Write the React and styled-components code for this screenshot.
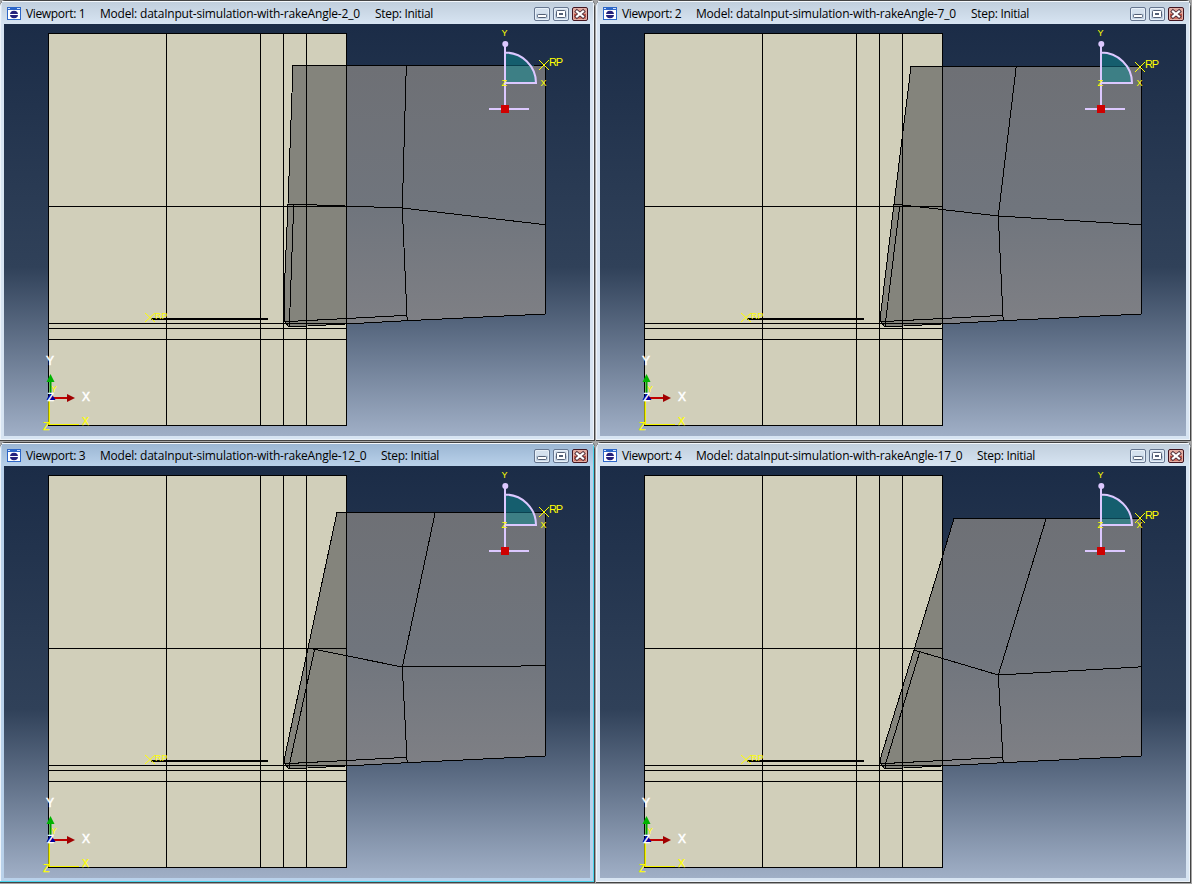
import React from 'react';
import styled, { createGlobalStyle } from 'styled-components';

const GlobalStyle = createGlobalStyle`
  * { box-sizing: border-box; }
  body { margin: 0; overflow: hidden; background: #a5a5a5; }
`;

const Workspace = styled.main`
  width: 1192px;
  height: 884px;
  display: grid;
  grid-template-columns: 596px 596px;
  grid-template-rows: 442px 442px;
  background: #a5a5a5;
  font-family: "Open Sans", "Noto Sans", sans-serif;
`;

const Window = styled.section`
  width: 595px;
  height: 441px;
  display: flex;
  flex-direction: column;
  padding: 0 4px 4px;
  border-radius: 5px 5px 0 0;
  overflow: hidden;
  background: ${(p) => (p.$active ? '#b9d1ea' : '#d7e4f2')};
  box-shadow: inset 0 1px #3c3c3c, inset 0 2px #f2f7fc, inset -1px -1px #444,
    inset -2px -2px ${(p) => (p.$active ? '#48d5ee' : '#eef4fa')}, inset 1px 0 #eef4fa;
`;

const TitleBar = styled.header`
  height: 24px;
  flex: none;
  margin: 0 -2px;
  padding: 4px 5px 0 5px;
  display: flex;
  align-items: center;
  background: ${(p) =>
    p.$active
      ? 'linear-gradient(#99b4d1, #b9d1ea)'
      : 'linear-gradient(#bfcddb, #d7e4f2)'};
  box-shadow: inset 0 1px #444, inset 0 2px #f4f8fc;
`;

const Label = styled.span`
  font-size: 12px;
  line-height: 16px;
  white-space: pre;
  color: #000;
  width: ${(p) => p.$width}px;
  margin-right: 15px;
  letter-spacing: ${(p) => p.$spacing || 0}px;
`;

const AppIcon = styled.svg`
  width: 14px;
  height: 14px;
  margin-right: 5px;
  flex: none;
`;

const Controls = styled.div`
  display: flex;
  gap: 3px;
  margin-left: auto;
`;

const ControlButton = styled.button`
  width: 16px;
  height: 14px;
  padding: 0;
  display: block;
  border: 1px solid ${(p) => (p.$close ? '#43141f' : '#65758f')};
  border-radius: 2px;
  background: ${(p) =>
    p.$close
      ? 'linear-gradient(#e0a397 0 45%, #b8483c 50%, #d78373)'
      : 'linear-gradient(#d5e1ee 0 45%, #b4c6da 50%, #cfdeed)'};
  box-shadow: inset 0 0 0 1px ${(p) => (p.$close ? '#e3b1a8' : '#e8f0f8')};
  svg { display: block; }
`;

const Canvas = styled.svg`
  width: 586px;
  height: 412px;
  flex: none;
  display: block;
  font-family: "Liberation Sans", Arial, sans-serif;
`;

const MODELS = [
  { id: 1, model: '2_0', modelWidth: 260, top: 65, left: 293, topMid: 406, shoulder: [288, 204], centre: 208, rightMid: 225, inner: [293, 205], rp: 65 },
  { id: 2, model: '7_0', modelWidth: 260, top: 66, left: 315, topMid: 420, shoulder: [298, 204], centre: 216, rightMid: 225, inner: [303, 206], rp: 67 },
  { id: 3, model: '12_0', modelWidth: 266, top: 70, left: 337, topMid: 435, shoulder: [308, 206], centre: 225, rightMid: 224, inner: [314, 207], rp: 70, active: true },
  { id: 4, model: '17_0', modelWidth: 266, top: 76, left: 358, topMid: 450, shoulder: [318, 208], centre: 233, rightMid: 225, inner: [323, 210], rp: 76 },
];

function ViewportIcon() {
  return (
    <AppIcon viewBox="0 0 14 14">
      <rect width="14" height="13" fill="#2c66c8" />
      <path d="M1 1.5h2M10 1.5h3" stroke="#cfe2ff" />
      <rect x="1" y="3" width="12" height="9" fill="#fff" />
      <path d="M3 7.5a4 3.8 0 0 1 8 0a4 3.8 0 0 1-8 0" fill="#25217c" />
      <path d="M2 7.5h10" stroke="#fff" />
    </AppIcon>
  );
}

function WindowControls() {
  return (
    <Controls>
      <ControlButton aria-label="Minimize">
        <svg width="14" height="12"><rect x="2.5" y="6.5" width="9" height="3" rx="1" fill="#fff" stroke="#535f75" /></svg>
      </ControlButton>
      <ControlButton aria-label="Maximize">
        <svg width="14" height="12"><rect x="2.5" y="2.5" width="9" height="7" rx="1" fill="#fff" stroke="#535f75" /><rect x="5.5" y="5.5" width="3" height="1" fill="#b9cadd" stroke="#535f75" /></svg>
      </ControlButton>
      <ControlButton $close aria-label="Close">
        <svg width="14" height="12"><path d="M4 3.5l6 5M10 3.5l-6 5" stroke="#4f303b" strokeWidth="4" strokeLinecap="square" /><path d="M4 3.5l6 5M10 3.5l-6 5" stroke="#fff" strokeWidth="2.2" strokeLinecap="square" /></svg>
      </ControlButton>
    </Controls>
  );
}

function Workpiece() {
  return (
    <path
      d="M166.5 34v392M260.5 34v392M283.5 34v392M306.5 34v392M48 206.5h299M48 323.5h299M48 328.5h299M48 339.5h299M48.5 33.5h298v392h-298z"
      fill="none" stroke="#000" shapeRendering="crispEdges"
    />
  );
}

function ViewCompass({ id, top }) {
  const clip = `compass-${id}`;
  return (
    <g>
      <clipPath id={clip}><rect x="500" y={top} width="45" height="50" /></clipPath>
      <path d="M505 53a31 30 0 0 1 31 30h-31z" fill="#155e6e" />
      <path d="M505 53a31 30 0 0 1 31 30h-31z" fill="#3d7f85" clipPath={`url(#${clip})`} />
      <path d={`M505 ${top + 0.5}h29`} stroke="#0b4250" />
      <path d="M505 44v64M505 52.5a31 30.5 0 0 1 31 30.5H505" fill="none" stroke="#dcc8ff" strokeWidth="2" />
      <path d="M489 109h40" stroke="#dcc8ff" strokeWidth="2" />
      <circle cx="505.3" cy="44" r="3" fill="#dcc8ff" />
      <rect x="501" y="105" width="8" height="8" fill="#cf0000" />
    </g>
  );
}

function Triad() {
  return (
    <g>
      <path d="M49 400v25" stroke="#96960a" strokeWidth="2" shapeRendering="crispEdges" />
      <path d="M49.5 400v25M49 424.5h30" stroke="#f4f400" shapeRendering="crispEdges" />
      <text x="51" y="392" fontSize="9" fill="#ffff00">Y</text>
      <path d="M50.5 398v-17" stroke="#00a000" strokeWidth="2" />
      <path d="M50.5 374l4 8h-8z" fill="#00b400" />
      <path d="M52 398h15" stroke="#c00000" strokeWidth="2" />
      <path d="M67 394l8 4-8 4z" fill="#a00000" />
      <path d="M50.5 392l5 8h-9z" fill="#0000a0" />
      <g fill="#ffff00" stroke="#ffff00" strokeWidth=".25" fontSize="10.5">
        <text x="82" y="425">X</text>
        <text x="43" y="430">Z</text>
      </g>
      <g fill="#fff" stroke="#fff" strokeWidth=".5" fontSize="12">
        <text x="46" y="365">Y</text>
        <text x="82" y="401">X</text>
        <text x="47.5" y="401" fontSize="10.5">Z</text>
      </g>
    </g>
  );
}

function Scene({ id, top, left, topMid, shoulder, centre, rightMid, inner, rp }) {
  const [sx, sy] = shoulder;
  const outline = `M${left} ${top + 0.5}H545.5V314L407 320.7L289 327L284.3 321.5V${id === 1 ? 290 : 317}L${sx} ${sy}z`;
  return (
    <Canvas viewBox="4 24 586 412">
      <defs>
        <linearGradient id={`sky-${id}`} x1="0" y1="24" x2="0" y2="436" gradientUnits="userSpaceOnUse">
          <stop offset="0" stopColor="#1b2c47" />
          <stop offset=".59" stopColor="#304159" />
          <stop offset="1" stopColor="#a0afc6" />
        </linearGradient>
        <linearGradient id={`steel-${id}`} x1="0" y1="66" x2="0" y2="327" gradientUnits="userSpaceOnUse">
          <stop offset="0" stopColor="#6e7075" />
          <stop offset=".55" stopColor="#70757d" />
          <stop offset="1" stopColor="#7f8085" />
        </linearGradient>
        <clipPath id={`block-${id}`}><rect x="48" y="34" width="299" height="392" /></clipPath>
      </defs>
      <rect x="4" y="24" width="586" height="412" fill={`url(#sky-${id})`} />
      <rect x="48" y="33" width="299" height="393" fill="#d1cfba" />
      <path d={outline} fill={`url(#steel-${id})`} />
      <path d={outline} fill="#84847c" clipPath={`url(#block-${id})`} />
      <Workpiece />
      <g fill="none" stroke="#000" shapeRendering="crispEdges">
        <path d={outline} />
        <path d={`M${topMid}.3 ${top}L402.3 ${centre}L407.2 321`} />
        <path d={`M${sx} ${sy}L402.3 ${centre}L546 ${rightMid - 0.2}`} />
        <path d={`M${inner[0]}.7 ${inner[1]}L289.5 322V327M284 321.5H289L407 315.3`} />
      </g>
      <path d="M151 319h117" stroke="#000" strokeWidth="2" shapeRendering="crispEdges" />
      <g stroke="#ffff00">
        <path d="M145 313l10 9M155 313l-10 9" />
        <path d={`M539 ${rp - 5}l10 10M549 ${rp - 5}l-10 10`} />
      </g>
      <ViewCompass id={id} top={top} />
      <g fill="#ffff00" fontSize="11">
        <text x="155" y="319" fontSize="9">RP</text>
        <text x="549" y={rp + 1} textLength="14">RP</text>
        <text x="501.5" y="36" fontSize="9">Y</text>
        <text x="501.5" y="86" fontSize="9">Z</text>
        <text x="540.5" y="86" fontSize="9">X</text>
      </g>
      <Triad />
    </Canvas>
  );
}

function Viewport(props) {
  return (
    <Window $active={props.active}>
      <TitleBar $active={props.active}>
        <ViewportIcon />
        <Label $width={59} $spacing={-0.35}>{`Viewport: ${props.id}`}</Label>
        <Label $width={props.modelWidth} $spacing={-0.2}>{`Model: dataInput-simulation-with-rakeAngle-${props.model}`}</Label>
        <Label $width={60} $spacing={-0.3}>Step: Initial</Label>
        <WindowControls />
      </TitleBar>
      <Scene {...props} />
    </Window>
  );
}

export default function App() {
  return (
    <>
      <GlobalStyle />
      <Workspace>
        {MODELS.map((m) => <Viewport key={m.id} {...m} />)}
      </Workspace>
    </>
  );
}
